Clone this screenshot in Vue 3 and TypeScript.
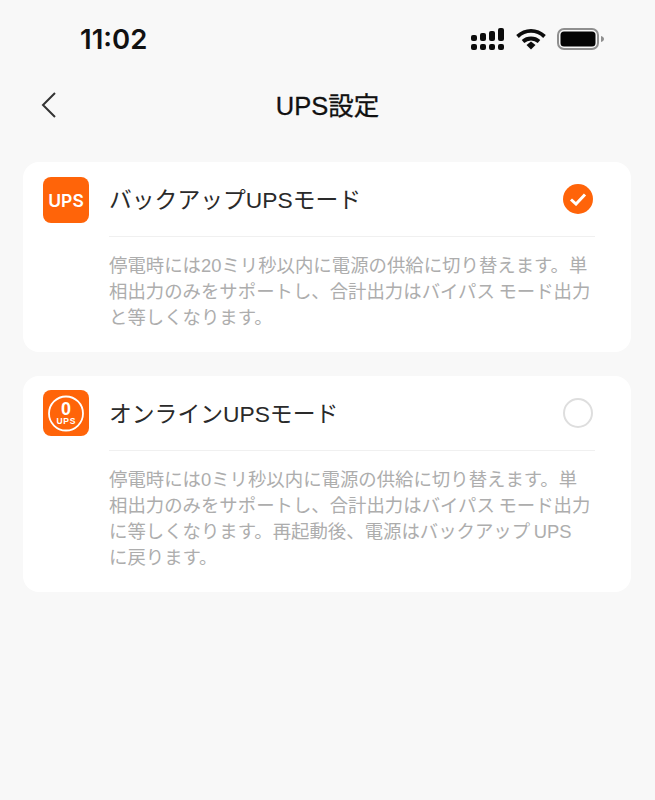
<script setup lang="ts">
interface Mode {
  title: string;
  lines: string[];
  selected: boolean;
  icon: "text" | "ring";
}

const modes: Mode[] = [
  {
    title: "バックアップUPSモード",
    lines: [
      "停電時には20ミリ秒以内に電源の供給に切り替えます。単",
      "相出力のみをサポートし、合計出力はバイパス モード出力",
      "と等しくなります。",
    ],
    selected: true,
    icon: "text",
  },
  {
    title: "オンラインUPSモード",
    lines: [
      "停電時には0ミリ秒以内に電源の供給に切り替えます。単",
      "相出力のみをサポートし、合計出力はバイパス モード出力",
      "に等しくなります。再起動後、電源はバックアップ UPS",
      "に戻ります。",
    ],
    selected: false,
    icon: "ring",
  },
];
</script>

<template>
  <div class="page">
    <header class="status">
      <span class="time">11:02</span>
      <div class="status-icons">
        <svg width="34" height="23" viewBox="0 0 34 23">
          <g fill="#0c0c0c">
            <rect x="0" y="7" width="6" height="6" rx="2" />
            <rect x="9" y="5" width="6" height="8" rx="2" />
            <rect x="18" y="3" width="6" height="10" rx="2" />
            <rect x="27" y="0" width="6" height="13" rx="2" />
            <rect x="0" y="16" width="6" height="6" rx="2" />
            <rect x="9" y="16" width="6" height="6" rx="2" />
            <rect x="18" y="16" width="6" height="6" rx="2" />
            <rect x="27" y="16" width="6" height="6" rx="2" />
          </g>
        </svg>
        <svg class="wifi" width="30" height="22" viewBox="0 0 30 22">
          <path d="M1.500 8.500C9.500 1 20.500 1 28.500 8.500" fill="none" stroke="#0c0c0c" stroke-width="3.800" />
          <path d="M7 13.500C11.500 9.500 18.500 9.500 23 13.500" fill="none" stroke="#0c0c0c" stroke-width="3.800" />
          <path d="M10.500 17L15 13.500L19.500 17L15 21.500Z" fill="#0c0c0c" />
        </svg>
        <svg class="battery" width="48" height="24" viewBox="0 0 48 24">
          <rect x="1" y="2" width="40" height="20" rx="6" fill="none" stroke="#8f8f8f" stroke-width="2" />
          <rect x="3.500" y="4.500" width="35" height="15" rx="3.500" fill="#050505" />
          <path d="M44 9c2 .5 3 1.600 3 3s-1 2.500-3 3z" fill="#8f8f8f" />
        </svg>
      </div>
    </header>

    <nav class="nav">
      <svg class="back" width="18" height="28" viewBox="0 0 18 28">
        <path d="M15 2L3 14L15 26" fill="none" stroke="#333" stroke-width="2" />
      </svg>
      <h1 class="title">UPS設定</h1>
    </nav>

    <main class="list">
      <section v-for="mode in modes" :key="mode.title" class="card">
        <div class="row">
          <div class="badge" :class="{ 'badge-ring': mode.icon === 'ring' }">
            <span v-if="mode.icon === 'text'" class="badge-text">UPS</span>
            <svg v-else width="46" height="46" viewBox="0 0 46 46">
              <circle cx="23" cy="23.500" r="17" fill="none" stroke="#fff" stroke-width="1.800" />
              <text x="23" y="24.500" class="ring-zero" text-anchor="middle">0</text>
              <text x="23.300" y="34" class="ring-label" text-anchor="middle">UPS</text>
            </svg>
          </div>
          <div class="row-main">
            <span class="mode-title">{{ mode.title }}</span>
            <span v-if="mode.selected" class="check">
              <svg width="18" height="14" viewBox="0 0 18 14">
                <path d="M2 7.500L7 12L16 2.500" fill="none" stroke="#fff" stroke-width="3" />
              </svg>
            </span>
            <span v-else class="radio"></span>
          </div>
        </div>
        <p class="desc">
          <span v-for="line in mode.lines" :key="line" class="desc-line">{{ line }}</span>
        </p>
      </section>
    </main>
  </div>
</template>

<style>
html,
body {
  margin: 0;
  background: #f8f8f8;
}
</style>

<style scoped>
.page {
  width: 655px;
  height: 800px;
  overflow: hidden;
  background: #f8f8f8;
  font-family: "Liberation Sans", "Noto Sans CJK JP", sans-serif;
  color: #222;
}

.status {
  display: flex;
  justify-content: space-between;
  align-items: center;
  height: 39px;
  padding: 0 50px 0 80px;
  margin-top: 20px;
}

.time {
  margin-top: -2px;
  font-family: Inter, "Liberation Sans", sans-serif;
  font-size: 27.500px;
  font-weight: 600;
  color: #111;
}

.status-icons {
  display: flex;
  align-items: center;
  gap: 11px;
}

.wifi,
.battery {
  margin-top: -2px;
}

.nav {
  position: relative;
  display: flex;
  justify-content: center;
  align-items: center;
  height: 40px;
  margin-top: 27px;
}

.back {
  position: absolute;
  left: 40px;
  top: 5px;
}

.title {
  margin: 0 0 5px;
  font-size: 25.500px;
  font-weight: 400;
  color: #111;
  -webkit-text-stroke: 0.3px #111;
}

.list {
  display: flex;
  flex-direction: column;
  gap: 24px;
  margin: 36px 24px 0 23px;
}

.card {
  background: #fff;
  border-radius: 16px;
  padding: 15px 36px 21px 20px;
}

.row {
  display: flex;
  gap: 20px;
}

.badge {
  display: flex;
  align-items: center;
  justify-content: center;
  width: 46px;
  height: 46px;
  flex: none;
  border-radius: 8px;
  background: #ff6409;
  color: #fff;
}

/* second icon sits a pixel higher than the first in the reference */
.badge-ring {
  margin-top: -1px;
}

.badge-text {
  font-family: Inter, "Liberation Sans", sans-serif;
  font-size: 17.500px;
  font-weight: 600;
}

.ring-zero {
  fill: #fff;
  font-size: 18px;
  font-weight: 700;
}

.ring-label {
  fill: #fff;
  font-size: 8.500px;
  font-weight: 700;
  letter-spacing: 0.7px;
}

.row-main {
  flex: 1;
  display: flex;
  align-items: center;
  justify-content: space-between;
  height: 60px;
  padding-right: 2px;
  padding-bottom: 15px;
  box-sizing: border-box;
  border-bottom: 1px solid #f0f0f0;
}

.mode-title {
  margin-bottom: 2px;
  font-size: 22.800px;
  color: #2a2a2a;
}

.check,
.radio {
  display: flex;
  align-items: center;
  justify-content: center;
  width: 30px;
  height: 30px;
  box-sizing: border-box;
  border-radius: 50%;
}

.check {
  background: #ff6409;
}

.radio {
  border: 2px solid #dedede;
}

.desc {
  margin: 16px 0 0 66px;
  font-size: 18.400px;
  line-height: 26px;
  word-spacing: -1.500px;
  color: #adadad;
}

.desc-line {
  display: block;
  white-space: nowrap;
}
</style>
